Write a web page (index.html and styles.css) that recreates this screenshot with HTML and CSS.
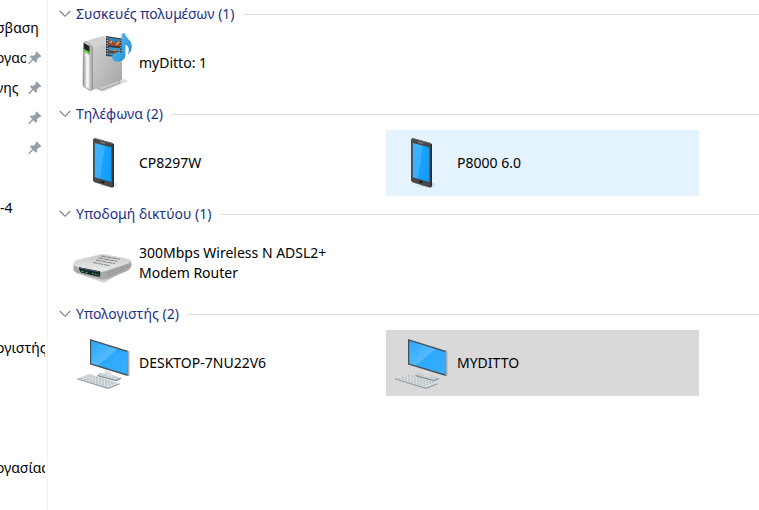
FILE: index.html
```html
<!DOCTYPE html>
<html lang="el">
<head>
<meta charset="utf-8">
<title>Δίκτυο</title>
<link rel="stylesheet" href="styles.css">
</head>
<body>
<svg class="defs" aria-hidden="true">
  <defs>
    <linearGradient id="screen" x1="0" y1="0" x2="1" y2=".35">
      <stop offset="0" stop-color="#3fb4ff"/><stop offset=".54" stop-color="#38b0ff"/><stop offset=".58" stop-color="#1ca2fb"/><stop offset="1" stop-color="#129bf8"/>
    </linearGradient>
    <linearGradient id="monitor" x1="0" y1="0" x2=".9" y2="1">
      <stop offset="0" stop-color="#2ba5fa"/><stop offset=".48" stop-color="#52bbff"/><stop offset=".52" stop-color="#2da9fc"/><stop offset="1" stop-color="#36aefd"/>
    </linearGradient>
    <linearGradient id="metal" x1="0" y1="0" x2="1" y2="1">
      <stop offset="0" stop-color="#d2d2d2"/><stop offset=".5" stop-color="#bdbdbd"/><stop offset="1" stop-color="#a4a4a4"/>
    </linearGradient>
    <linearGradient id="edge" x1="0" y1="0" x2="1" y2="0">
      <stop offset="0" stop-color="#8e8e8e"/><stop offset=".4" stop-color="#f2f2f2"/><stop offset="1" stop-color="#a0a0a0"/>
    </linearGradient>
    <linearGradient id="note" x1="0" y1="0" x2="1" y2="1">
      <stop offset="0" stop-color="#65c4f4"/><stop offset="1" stop-color="#1687d0"/>
    </linearGradient>
    <linearGradient id="top" x1="0" y1="0" x2="0" y2="1">
      <stop offset="0" stop-color="#c4c6c8"/><stop offset="1" stop-color="#ececec"/>
    </linearGradient>
    <symbol id="pin" viewBox="0 0 14 14">
      <path d="M8.6.7 13.1 5.2 12 6.1 11.1 5.9 8.7 8.3 8.9 10.6 7.9 11.5 5.3 8.9 1.2 12.9.5 12.7.7 12.1 4.5 8 2.2 5.7 3.1 4.7 5.7 5 8 2.7 7.7 1.7Z" fill="#929da6" stroke="#929da6" stroke-width=".5"/>
    </symbol>
    <symbol id="chevron" viewBox="0 0 12 8">
      <path d="M.8 1 6 6.3 11.2 1" fill="none" stroke="#7a7a7a" stroke-width="1.1"/>
    </symbol>
    <symbol id="phone" viewBox="0 0 68 66">
      <path d="M30 56 46 58 50 54 45 52Z" fill="#777" opacity=".18"/>
      <path d="M25 9.5 26.5 8 44.5 13 46 14.5V56L44.3 57.8 26.3 52.2 25 50.5Z" fill="#484848"/>
      <path d="M44.6 13.3 46 14.5V56L44.6 57.5Z" fill="#2a2a2a"/>
      <path d="M25.4 9.5 26.7 8.4 44.5 13.4" fill="none" stroke="#777" stroke-width=".8"/>
      <path d="M26.8 13 43.4 17.5V52L26.8 47.3Z" fill="url(#screen)"/>
      <path d="m32 12.1 5 1.4M33 51.8l4 1.3" stroke="#8c8c8c" stroke-width="1"/>
      <path d="m33.2 51.6 3.4 1.1" stroke="#151515" stroke-width="1.8"/>
    </symbol>
    <symbol id="computer" viewBox="0 0 68 66">
      <path d="m31 43 10 2v4l-10-2Z" fill="#aeb9c0"/>
      <path d="m30 44 9-1 14 5-4 3.5-19-5.3Z" fill="#c8d0d5"/>
      <path d="m29.5 45.5 18.5 5.2 5-2.5" fill="none" stroke="#7d8990" stroke-width="1.1"/>
      <path d="m36 40 7 2 1 5-5-1Z" fill="#d9dfe3"/>
      <path d="M22 9 60.5 21 61 45.5 59.6 46 22 34.5Z" fill="#454e55"/>
      <path d="M59.3 21 61.5 21.8V45L59.4 46Z" fill="#a9b0b5"/>
      <path d="M23.2 10.7 59 22V44.3L23.2 33.4Z" fill="url(#monitor)"/>
      <path d="m9 48.5 12-4.4L51.5 53.5 40 58.3Z" fill="#dce1e4"/>
      <path d="m9 48.7 31 9.6 11.5-4.5" fill="none" stroke="#909a9f" stroke-width="1.1"/>
      <path d="m12.8 48 27 8.2M15.8 46.9l27 8.3m-24-9.5 27 8.4m-24.3-9.4 26.5 8.4" stroke="#a5aeb3" stroke-width=".9" stroke-dasharray="2 1.2"/>
    </symbol>
    <symbol id="server" viewBox="0 0 68 66">
      <path d="M26 59 56 49 60 51 35 62Z" fill="#777" opacity=".25"/>
      <path d="m31 57 21-7v3l-18 7-7-3Z" fill="#c9c9c9" stroke="#888" stroke-width=".7"/>
      <path d="M23 17 34 7l17 4 3 2v36.5L23 60.5Z" fill="url(#metal)"/>
      <path d="M16.5 11.5 35 6 53 11.5 23 17.5Z" fill="#d2d2d2"/>
      <path d="M15.5 14Q16 11.5 18 12l5 3.2Q24.5 16.5 24.5 19V59.5Q23 61 21 60l-5-3.2Q15 56 15 54Z" fill="url(#edge)" stroke="#8b8b8b" stroke-width=".7"/>
      <path d="m16 13 5.6 3v8L16 21Z" fill="#202620"/>
      <path d="m16 19 5.6 3v2.4L16 21.6Z" fill="#65d836"/>
      <path d="m17 25 3 1.7V57" fill="none" stroke="#fff" stroke-width="1.2"/>
      <path d="M38 6 54 8.5v19L38 26Z" fill="#35373a"/>
      <path d="M40.5 7.5 52 9.3v7L40.5 15Z" fill="#2f86bd"/>
      <path d="M40.5 17 52 18.3v8L40.5 25Z" fill="#3c98ce"/>
      <path d="M40.5 10.5h3l2 2 3-1 3.5 2v3L40.5 15Z" fill="#a44634"/>
      <path d="m40.5 20 4 1 3-1 4.5 2v2.5L40.5 23Z" fill="#6e3b32"/>
      <path d="m42 13 2-2m4 4 3-3m-5 8 2 1" stroke="#edbb43" stroke-width="1.2"/>
      <path d="M39.2 7.5V26M53 9.5V22" stroke="#ddd" stroke-width="1.1" stroke-dasharray="1.2 1.4"/>
      <path d="M53.7 3.5 57 3.2C57.4 8 64.5 10 63.8 17.5 63.3 20.5 62 23 60 24.5 61.8 19.5 60.5 16 57.4 14.5V25C57.4 29.5 53 32 48.5 31.6 44 31 42.8 26.5 46 23.7 48.3 21.8 51.5 21.6 53.7 22.5Z" fill="url(#note)"/>
    </symbol>
    <symbol id="router" viewBox="0 0 68 66">
      <path d="M8 43 36 53 65 35 62 33Z" fill="#555" opacity=".25"/>
      <path d="M5.5 34Q6 31 9 30L33 24.5Q36 24 39 25L60 29Q63.5 30 63.2 34V36.5Q63 38.8 59 41L41 48.5Q36.5 50.5 31 49L9 43Q5.5 41.5 5.5 39Z" fill="#a6a8aa"/>
      <path d="M6 33Q7 31 10 30L33 24.5Q36 24 39 25L60 29Q64 31 60 33L38 40.5Q34 42 29 41L9 36.5Q5.5 35.5 6 33Z" fill="url(#top)" stroke="#e3e3e3" stroke-width=".8"/>
      <path d="m33 26 19 3.2M30.5 28l19 3.4M28 30.2l19 3.4M25 32.5l17 3.2" stroke="#85888a" stroke-width="1" stroke-dasharray="5 .6"/>
      <path d="m39 43 22-8M39 46l22-9" stroke="#808385" stroke-width=".8" stroke-dasharray="1.4 1"/>
      <path d="M11 37.2 32 41.3Q33 44 31.6 47L13 42.6Q10.8 40 11 37.2Z" fill="#142028"/>
      <path d="m12 38 19 4" stroke="#496678" stroke-width="1"/>
      <path d="m13.5 41.2 2 .5m2 .4 2 .5m4.5.8 1.5.3m1.5.4 1.5.3m1 .3 1.2.3" stroke="#35c354" stroke-width="1.2"/>
    </symbol>
  </defs>
</svg>
<div class="window">
  <nav class="sidebar">
    <a class="nav-item" href="#"><span class="label cut">σβαση</span></a>
    <a class="nav-item pinned" href="#"><span class="label cut">ργασ</span><svg class="pin"><use href="#pin"/></svg></a>
    <a class="nav-item pinned" href="#"><span class="label cut">νης</span><svg class="pin"><use href="#pin"/></svg></a>
    <a class="nav-item pinned" href="#"><svg class="pin"><use href="#pin"/></svg></a>
    <a class="nav-item pinned" href="#"><svg class="pin"><use href="#pin"/></svg></a>
    <a class="nav-item drive" href="#"><span class="label">-4</span></a>
    <a class="nav-item computer" href="#"><span class="label cut">ογιστής</span></a>
    <a class="nav-item desktop" href="#"><span class="label cut">ργασίας</span></a>
  </nav>
  <main class="content">
    <section class="group">
      <h2 class="group-title"><button class="toggle" type="button"><svg class="chevron"><use href="#chevron"/></svg>Συσκευές πολυμέσων (1)</button></h2>
      <div class="tiles">
        <button class="tile" type="button"><svg class="icon"><use href="#server"/></svg><span class="name">myDitto: 1</span></button>
      </div>
    </section>
    <section class="group">
      <h2 class="group-title"><button class="toggle" type="button"><svg class="chevron"><use href="#chevron"/></svg>Τηλέφωνα (2)</button></h2>
      <div class="tiles">
        <button class="tile" type="button"><svg class="icon"><use href="#phone"/></svg><span class="name">CP8297W</span></button>
        <button class="tile hovered" type="button"><svg class="icon"><use href="#phone"/></svg><span class="name">P8000 6.0</span></button>
      </div>
    </section>
    <section class="group">
      <h2 class="group-title"><button class="toggle" type="button"><svg class="chevron"><use href="#chevron"/></svg>Υποδομή δικτύου (1)</button></h2>
      <div class="tiles">
        <button class="tile" type="button"><svg class="icon"><use href="#router"/></svg><span class="name">300Mbps Wireless N ADSL2+ Modem Router</span></button>
      </div>
    </section>
    <section class="group">
      <h2 class="group-title"><button class="toggle" type="button"><svg class="chevron"><use href="#chevron"/></svg>Υπολογιστής (2)</button></h2>
      <div class="tiles">
        <button class="tile" type="button"><svg class="icon"><use href="#computer"/></svg><span class="name">DESKTOP-7NU22V6</span></button>
        <button class="tile selected" type="button"><svg class="icon"><use href="#computer"/></svg><span class="name">MYDITTO</span></button>
      </div>
    </section>
  </main>
</div>
</body>
</html>
```
FILE: styles.css
```css
* {
  box-sizing: border-box;
}

body {
  margin: 0;
  background: #fff;
  color: #000;
  font: 14px/20px "Noto Sans", "Open Sans", sans-serif;
}

.defs {
  position: absolute;
  width: 0;
  height: 0;
}

.window {
  display: flex;
  min-height: 100vh;
}

.sidebar {
  flex: none;
  width: 48px;
  padding: 13px 2px 0 0;
  border-right: 1px solid #f2f2f2;
  overflow: hidden;
}

.nav-item {
  display: flex;
  align-items: center;
  height: 30px;
  color: inherit;
  text-decoration: none;
}

.label {
  flex: 1;
  overflow: hidden;
  white-space: nowrap;
}

.cut {
  text-indent: -4px;
}

.pinned {
  gap: 2px;
  padding-right: 3px;
}

.pin {
  flex: none;
  width: 14px;
  height: 14px;
  margin-left: auto;
}

.drive {
  margin-top: 30px;
}

.computer {
  margin-top: 110px;
}

.desktop {
  margin-top: 90px;
}

.content {
  flex: 1;
  min-width: 0;
}

.group {
  padding-bottom: 4px;
}

.group-title {
  display: flex;
  align-items: center;
  gap: 8px;
  height: 28px;
  margin: 0 0 2px;
  padding-left: 11px;
}

.group-title::after {
  content: "";
  flex: 1;
  height: 1px;
  background: #e2e2e2;
}

.toggle,
.tile {
  display: flex;
  align-items: center;
  padding: 0;
  border: 0;
  background: none;
  font: inherit;
  text-align: left;
}

.toggle {
  gap: 5px;
  color: #1e3287;
  font: 14px/20px "Noto Sans", "Open Sans", sans-serif;
}

.chevron {
  width: 12px;
  height: 8px;
}

.tiles {
  display: grid;
  grid-template-columns: repeat(auto-fill, 313px);
  gap: 5px;
  padding-left: 20px;
}

.tile {
  gap: 3px;
  height: 66px;
  color: inherit;
}

.icon {
  flex: none;
  width: 68px;
  height: 66px;
}

.name {
  max-width: 210px;
}

.hovered {
  background: #e5f3ff;
}

.selected {
  background: #d9d9d9;
}
```
